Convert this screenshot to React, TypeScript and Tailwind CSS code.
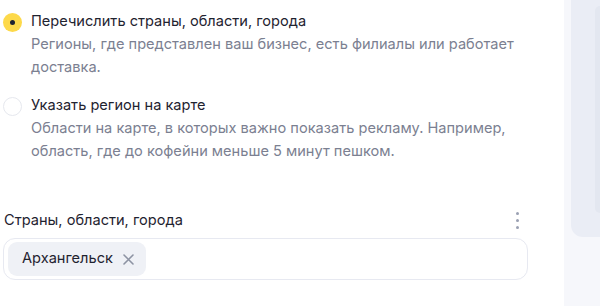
import React from "react";

export default function App() {
  return (
    <div className="flex w-[600px] h-[306px] overflow-hidden bg-white" style={{ fontFamily: "Inter, 'Noto Sans', sans-serif" }}>
      <div className="w-[564px] shrink-0 pl-[3px] pr-[36px] pt-[10px]">
        <div className="flex gap-[9px]">
          <div className="mt-[3px] w-[19px] h-[19px] rounded-full bg-[#fdd94a] flex items-center justify-center shrink-0">
            <div className="w-[5px] h-[5px] rounded-full bg-[#1e2230]" />
          </div>
          <div>
            <div className="text-[14.6px] leading-[22px] text-[#1f2330]">Перечислить страны, области, города</div>
            <div className="text-[14.6px] leading-[22.5px] text-[#7b8091] mt-[1px]">Регионы, где представлен ваш бизнес, есть филиалы или работает доставка.</div>
          </div>
        </div>
        <div className="flex gap-[9px] mt-[16px]">
          <div className="mt-[3px] w-[19px] h-[19px] rounded-full bg-white border border-[#e6e8ee] shrink-0" />
          <div>
            <div className="text-[14.6px] leading-[22px] text-[#1f2330]">Указать регион на карте</div>
            <div className="text-[14.6px] leading-[22.5px] text-[#7b8091] mt-[1px]">Области на карте, в которых важно показать рекламу. Например, область, где до кофейни меньше 5 минут пешком.</div>
          </div>
        </div>
        <div className="flex items-center justify-between mt-[47px] pl-[1px] pr-[9px]">
          <div className="text-[14.6px] leading-[22px] text-[#1f2330]">Страны, области, города</div>
          <div className="flex flex-col gap-[4px]">
            <div className="w-[3px] h-[3px] rounded-full bg-[#9aa0b2]" />
            <div className="w-[3px] h-[3px] rounded-full bg-[#9aa0b2]" />
            <div className="w-[3px] h-[3px] rounded-full bg-[#9aa0b2]" />
          </div>
        </div>
        <div className="mt-[7px] w-[525px] h-[42px] rounded-[12px] border border-[#e7e9f1] flex items-center pl-[4px]">
          <div className="h-[34px] rounded-[9px] bg-[#eff1f6] flex items-center pl-[14px] pr-[12px] gap-[10px]">
            <span className="text-[14.6px] text-[#1f2330]">Архангельск</span>
            <svg width="11" height="11" viewBox="0 0 11 11" fill="none">
              <path d="M1 1L10 10M10 1L1 10" stroke="#8d93a3" strokeWidth="1.6" strokeLinecap="round" />
            </svg>
          </div>
        </div>
      </div>
      <div className="flex-1 bg-[#f6f7fb] pl-[7px]">
        <div className="h-[237px] bg-[#eaedf5] rounded-bl-[12px] pl-[24px] pt-[6px] pb-[24px]">
          <div className="h-full bg-[#e3e7f0] rounded-l-[10px]" />
        </div>
      </div>
    </div>
  );
}
